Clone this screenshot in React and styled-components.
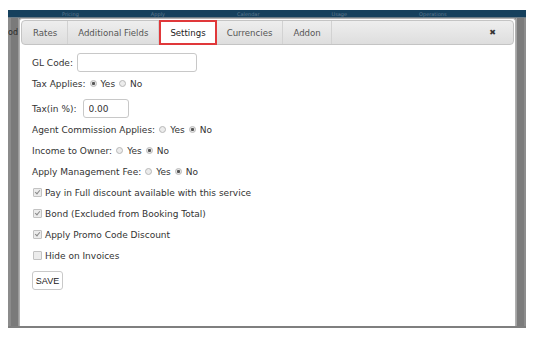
import React from "react";
import styled, { createGlobalStyle } from "styled-components";

const GlobalStyle = createGlobalStyle`
  body {
    margin: 0;
    font-family: "DejaVu Sans", Verdana, sans-serif;
  }
`;

const tabs = ["Rates", "Additional Fields", "Settings", "Currencies", "Addon"];
const navItems = ["Pricing", "Apply", "Calendar", "Usage", "Operations"];

const App = () => {
  return (
    <Page>
      <GlobalStyle />
      <Backdrop>
        <TopNav>
          {navItems.map((item) => (
            <NavItem key={item}>{item}</NavItem>
          ))}
        </TopNav>
        <Middle>
          <LeftEdge>
            <EdgeText>od</EdgeText>
          </LeftEdge>
          <Dialog>
            <TabBar>
              {tabs.map((tab) => (
                <Tab key={tab} active={tab === "Settings"}>
                  {tab}
                </Tab>
              ))}
              <Close>✖</Close>
            </TabBar>
            <Content>
              <Row>
                GL Code:
                <TextInput width={120} />
              </Row>
              <Row>
                Tax Applies:
                <Radio checked />
                Yes
                <Radio />
                No
              </Row>
              <Row spaced>
                Tax(in %):
                <TextInput width={46} gap={6} defaultValue="0.00" />
              </Row>
              <Row>
                Agent Commission Applies:
                <Radio />
                Yes
                <Radio checked />
                No
              </Row>
              <Row>
                Income to Owner:
                <Radio />
                Yes
                <Radio checked />
                No
              </Row>
              <Row>
                Apply Management Fee:
                <Radio />
                Yes
                <Radio checked />
                No
              </Row>
              <Row>
                <Check checked />
                Pay in Full discount available with this service
              </Row>
              <Row>
                <Check checked />
                Bond (Excluded from Booking Total)
              </Row>
              <Row>
                <Check checked />
                Apply Promo Code Discount
              </Row>
              <Row>
                <Check />
                Hide on Invoices
              </Row>
              <SaveRow>
                <SaveButton>SAVE</SaveButton>
              </SaveRow>
            </Content>
          </Dialog>
          <RightEdge />
        </Middle>
      </Backdrop>
    </Page>
  );
};

const Page = styled.div`
  width: 534px;
  height: 338px;
  box-sizing: border-box;
  padding: 10px 8px 10px 8px;
  background: #ffffff;
  overflow: hidden;
`;

const Backdrop = styled.div`
  height: 318px;
  display: flex;
  flex-direction: column;
  background: #7f7f7f;
  padding-bottom: 2px;
  box-sizing: border-box;
`;

const TopNav = styled.div`
  height: 7px;
  flex: none;
  background: #15405d;
  border-bottom: 1px solid #6d7d88;
  display: flex;
  align-items: center;
  gap: 72px;
  padding-left: 54px;
  overflow: hidden;
`;

const NavItem = styled.span`
  font-size: 5px;
  line-height: 6px;
  color: #5f7a90;
`;

const Middle = styled.div`
  flex: 1;
  display: flex;
  min-height: 0;
`;

const LeftEdge = styled.div`
  width: 11px;
  background: linear-gradient(to right, #8b8b8b 0 3px, #7a7a7a 3px 10px, #9a9a9a 10px);
  overflow: hidden;
  padding-top: 10px;
`;

const EdgeText = styled.span`
  display: block;
  font-size: 8px;
  color: #2a2a2a;
`;

const RightEdge = styled.div`
  width: 10px;
  background: linear-gradient(to right, #a3a3a3 0 1px, #7c7c7c 1px 8px, #8d8d8d 8px);
`;

const Dialog = styled.div`
  flex: 1;
  background: #ffffff;
  border: 1px solid #b0b0b0;
  border-bottom: none;
  border-radius: 3px 3px 0 0;
  padding: 1px 1px 0 1px;
  display: flex;
  flex-direction: column;
`;

const TabBar = styled.div`
  height: 25px;
  flex: none;
  box-sizing: border-box;
  display: flex;
  align-items: stretch;
  border: 1px solid #c4c4c4;
  border-radius: 4px;
  background: linear-gradient(#eeeeee, #dedede);
  padding-left: 1px;
`;

const Tab = styled.div`
  display: flex;
  align-items: center;
  padding: 0 ${(p) => (p.active ? "9px" : "10px")};
  font-size: 8.6px;
  color: ${(p) => (p.active ? "#222" : "#555")};
  border-right: 1px solid #d2d2d2;
  ${(p) =>
    p.active &&
    `
    background: #ffffff;
    border: 2px solid #e0383a;
    margin-top: -1px;
    margin-bottom: -1px;
  `}
`;

const Close = styled.div`
  margin-left: auto;
  margin-right: 17px;
  display: flex;
  align-items: center;
  font-size: 8px;
  color: #333;
`;

const Content = styled.div`
  padding: 7px 0 0 11px;
  display: flex;
  flex-direction: column;
`;

const Row = styled.div`
  height: 21px;
  display: flex;
  align-items: center;
  font-size: 9px;
  color: #333;
  white-space: nowrap;
  margin-top: ${(p) => (p.spaced ? "4px" : "0")};
`;

const TextInput = styled.input`
  width: ${(p) => p.width}px;
  height: 19px;
  box-sizing: border-box;
  margin: 0 0 0 ${(p) => p.gap || 4}px;
  padding: 0 5px;
  border: 1px solid #c8c8c8;
  border-radius: 3px;
  font-family: "DejaVu Sans", Verdana, sans-serif;
  font-size: 9px;
  color: #333;
  background: #fff;
  outline: none;
`;

const Radio = styled.span`
  width: 7px;
  height: 7px;
  box-sizing: border-box;
  border-radius: 50%;
  border: 1px solid #b8b8b8;
  background: ${(p) =>
    p.checked
      ? "radial-gradient(circle, #555 0 1.3px, #e6e6e6 1.8px)"
      : "#ececec"};
  margin: 0 4px 0 4px;
  flex: none;
`;

const Check = styled.span`
  width: 9px;
  height: 9px;
  box-sizing: border-box;
  border: 1px solid #c2c2c2;
  border-radius: 1px;
  background: #ececec;
  margin: 0 3px 0 1px;
  flex: none;
  position: relative;
  &::after {
    content: ${(p) => (p.checked ? '""' : "none")};
    position: absolute;
    left: 2px;
    top: 0px;
    width: 2px;
    height: 4px;
    border-right: 1px solid #8a8a8a;
    border-bottom: 1px solid #8a8a8a;
    transform: rotate(40deg);
  }
`;

const SaveRow = styled.div`
  margin-top: 5px;
  display: flex;
`;

const SaveButton = styled.button`
  height: 19px;
  width: 31px;
  padding: 0;
  border: 1px solid #c9c9c9;
  border-radius: 3px;
  background: #ffffff;
  font-family: "Liberation Sans", Arial, sans-serif;
  font-size: 9px;
  color: #222;
`;

export default App;
